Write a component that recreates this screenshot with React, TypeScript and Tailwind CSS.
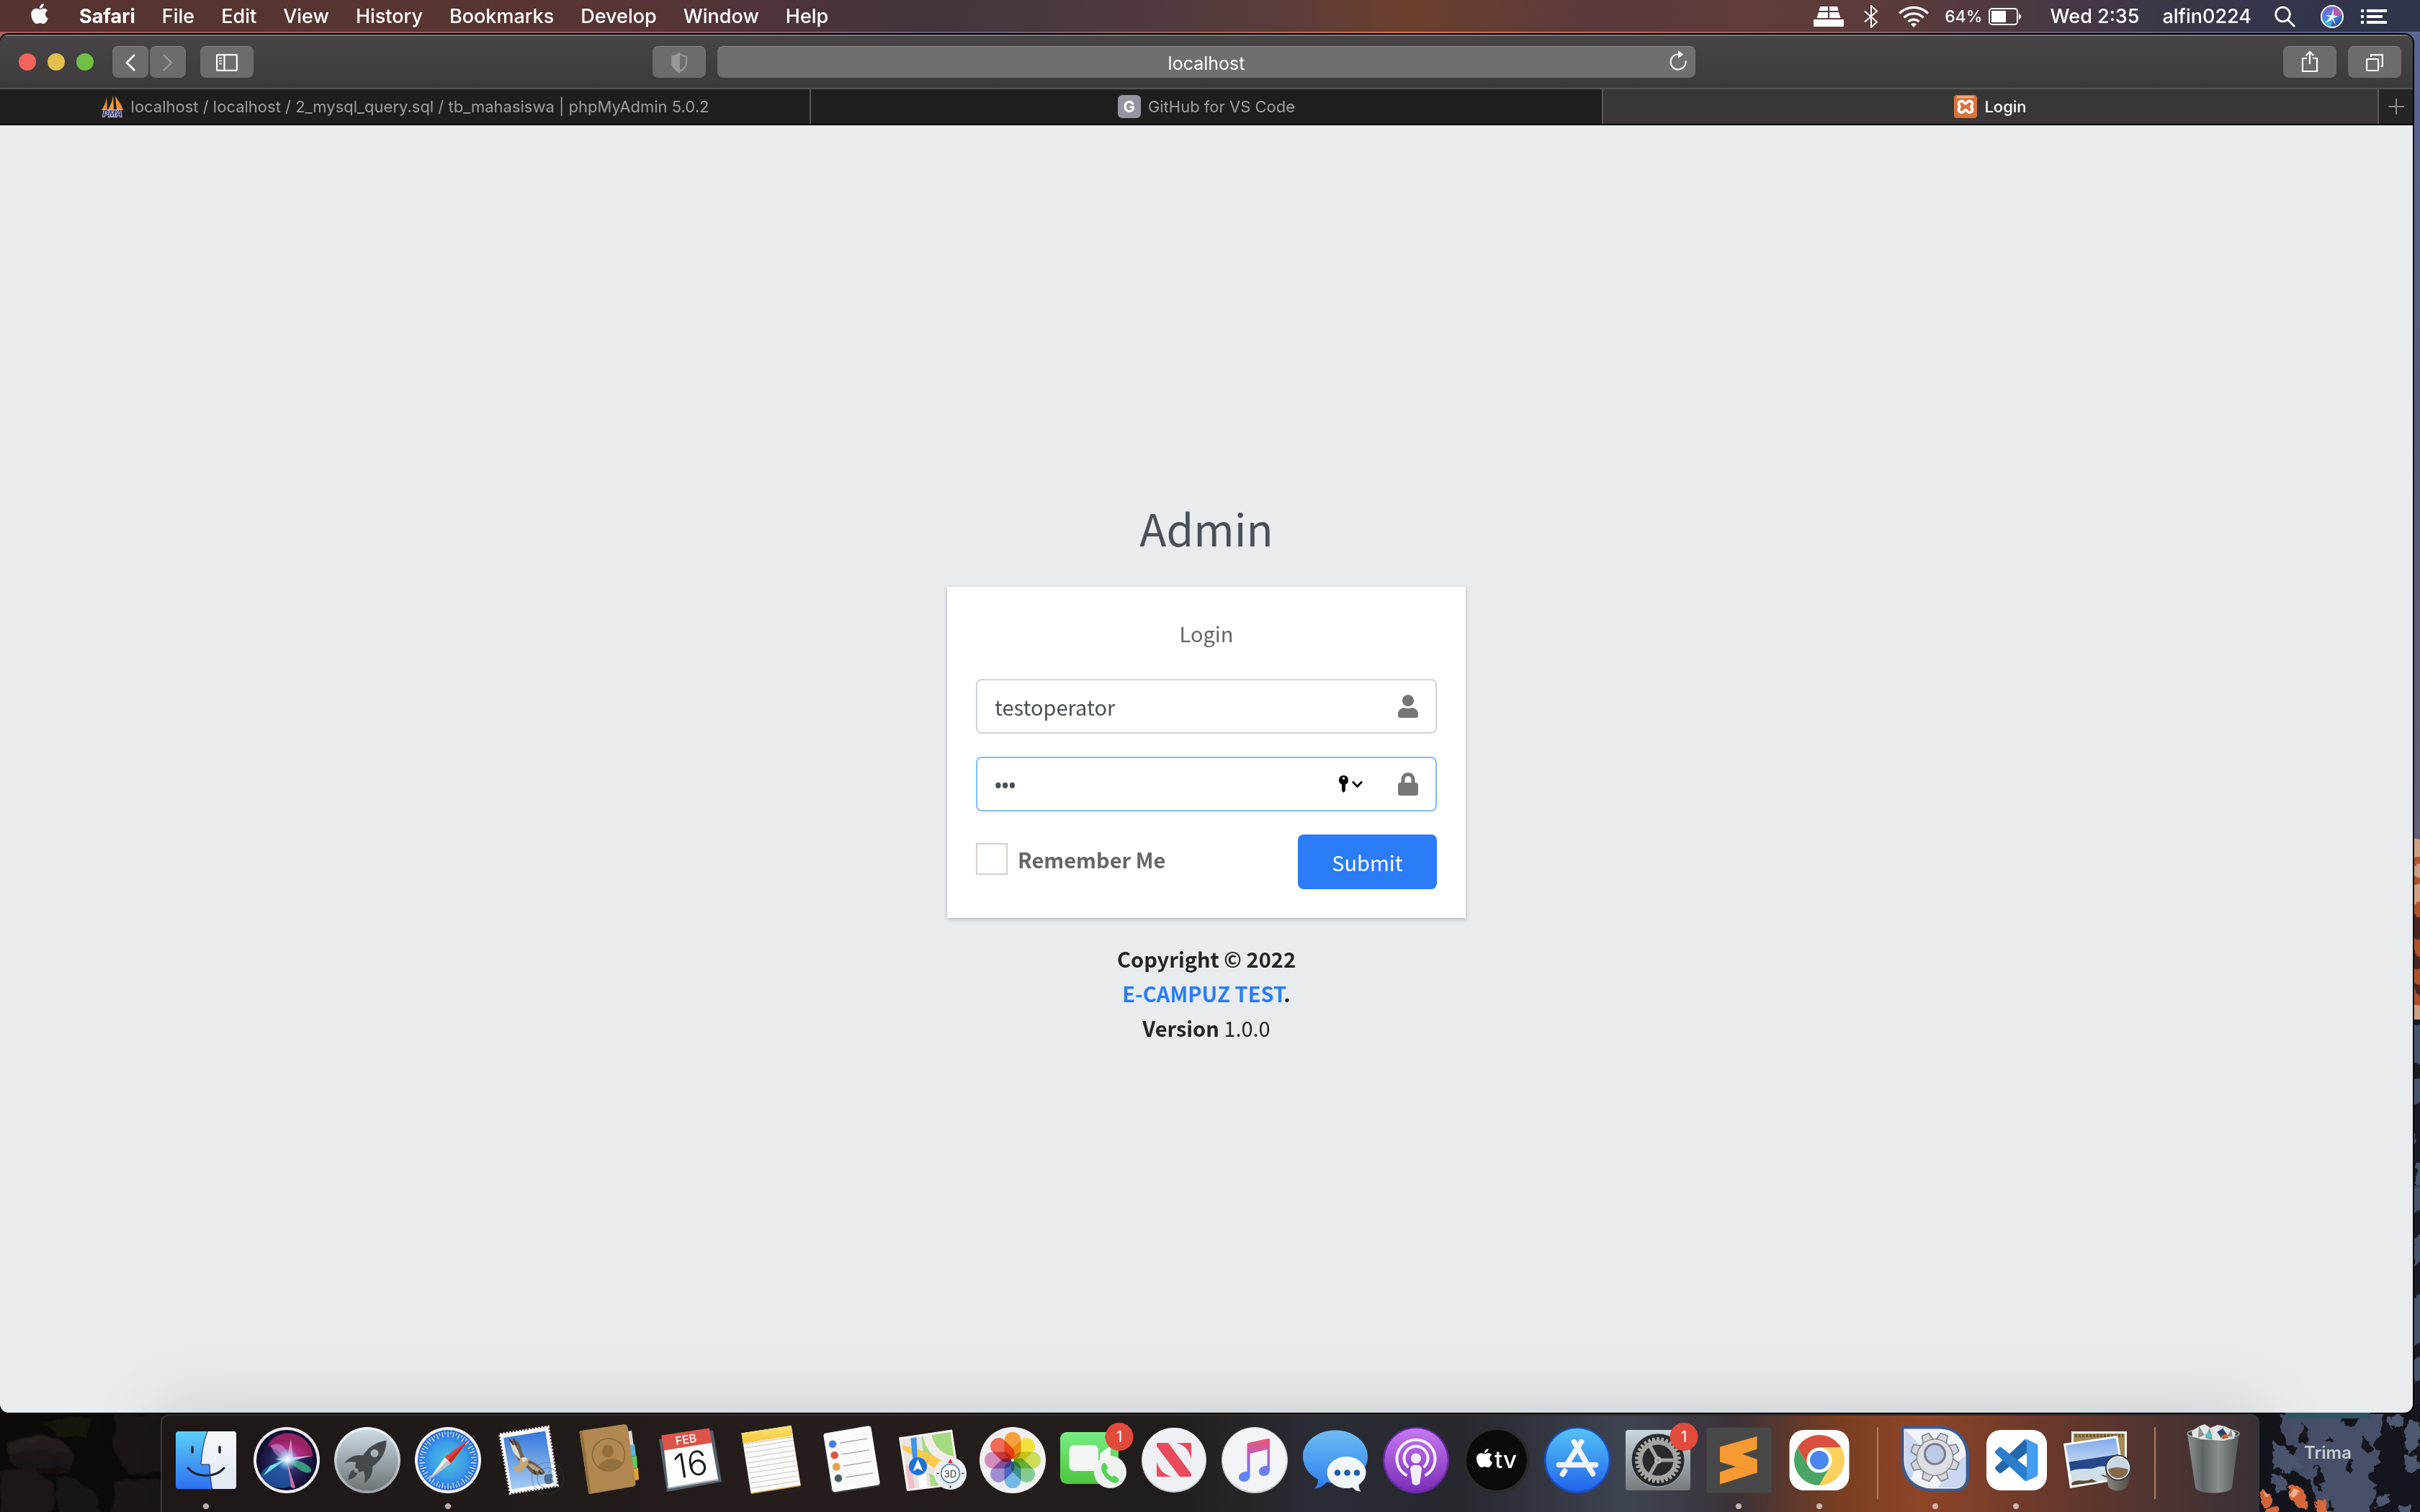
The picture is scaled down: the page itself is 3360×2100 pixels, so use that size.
import React, { useState } from "react";
import { FaApple, FaLock, FaUser } from "react-icons/fa";

/* ---------- wallpaper ---------- */

function Wallpaper() {
  return (
    <svg className="absolute inset-0 -z-10 h-full w-full" viewBox="0 0 3360 2100" preserveAspectRatio="none" aria-hidden="true">
      <defs>
        <linearGradient id="sky" x1="0" x2="1" y1="0" y2="0">
          <stop offset="0" stopColor="#a8615c" />
          <stop offset="0.3" stopColor="#8f6372" />
          <stop offset="0.4" stopColor="#665a78" />
          <stop offset="0.58" stopColor="#d0754a" />
          <stop offset="0.7" stopColor="#a96a66" />
          <stop offset="0.85" stopColor="#6d6078" />
          <stop offset="1" stopColor="#54608c" />
        </linearGradient>
        <linearGradient id="side" x1="0" x2="0" y1="0" y2="1">
          <stop offset="0" stopColor="#5b6794" />
          <stop offset="0.5" stopColor="#54597a" />
          <stop offset="1" stopColor="#665f77" />
        </linearGradient>
        <linearGradient id="rockA" x1="0" x2="0" y1="0" y2="1">
          <stop offset="0" stopColor="#2a2321" />
          <stop offset="1" stopColor="#120e0e" />
        </linearGradient>
        <filter id="rough" x="-5%" y="-5%" width="110%" height="110%">
          <feTurbulence type="fractalNoise" baseFrequency="0.09" numOctaves="3" seed="4" result="n" />
          <feDisplacementMap in="SourceGraphic" in2="n" scale="14" xChannelSelector="R" yChannelSelector="G" />
        </filter>
        <filter id="soft" x="-5%" y="-5%" width="110%" height="110%">
          <feTurbulence type="fractalNoise" baseFrequency="0.04" numOctaves="2" seed="9" result="n" />
          <feDisplacementMap in="SourceGraphic" in2="n" scale="16" xChannelSelector="R" yChannelSelector="G" />
          <feGaussianBlur stdDeviation="1.500" />
        </filter>
      </defs>
      <rect width="3360" height="2100" fill="#0d0a0a" />
      <rect width="3360" height="60" fill="url(#sky)" />
      <rect x="3330" y="40" width="30" height="1130" fill="url(#side)" />
      <path d="M3330 1160l30 6v250h-30z" fill="#cfa184" />
      <rect x="3330" y="1416" width="30" height="684" fill="#1a1b24" />
      <g filter="url(#rough)">
        <path d="M3340 1196l30-10v8l-30 12zM3340 1220l30-4v8l-30 8zM3340 1250l30 8v140l-30-6z" fill="#b1522c" />
        <path d="M3340 1270l30 4v30l-30 4zM3346 1320l24 10v20l-24-6zM3352 1366l18 4v16l-18-4z" fill="#4a2520" />
        <path d="M3340 1424h30v58l-30-14zM3346 1500l24-4v32l-24 8zM3340 1570l14 6-6 24-8 4zM3354 1614l16-4v30l-16 10zM3340 1650h30v30l-30 12zM3350 1720l20-8v34l-20 14zM3346 1806l24-16v70l-24 14zM3350 1888l20-8v30l-20 10z" fill="#4a546e" />
      </g>
      {/* snowy slope */}
      <rect x="3110" y="1950" width="250" height="150" fill="#15161d" />
      <g filter="url(#rough)">
        <path d="M3165 1962h144l-4 22-10 26 10 16-16 26 10 18-10 40h-64l-12-40-20-22-24-14 16-16-14-20z" fill="#465069" />
        <path d="M3156 2000l26 14 14 20-18 14-22-12zM3150 2050l16-6 12 18-14 14zM3318 1968l20-2-2 16-16 4zM3346 1970l14 6v30l-18 14-4-20zM3338 2022l18-2 2 20-16 6zM3298 2080l16-4 4 12-16 6zM3330 2094l16-4 2 10h-16z" fill="#4e5871" />
        <path d="M3196 1976l8 12-2 20-10-6zM3256 1962h16l6 10-10 10-14-6zM3232 1994l8 6-8 4zM3284 1996l8 12-2 12-10-8zM3262 2028l6 12-6 6-6-8zM3216 2032l9 18-2 22-10-14zM3198 2052l11 8-3 24-10-10zM3236 2084l6 14h-10zM3178 2004l11 6-5 9-10-5z" fill="#13141b" />
        <path d="M3140 2066l12 6 2 16-14 4zM3176 2066l16-4 10 14 4 18-16 2-10-16zM3214 2088l14-4 4 20h-14zM3146 2092l18-2v16h-18z" fill="#d8683c" />
        <path d="M3182 2068l8 4-2 6-8-2zM3144 2070l6 4-4 6z" fill="#f7b48a" />
      </g>
      {/* boulders */}
      <g filter="url(#soft)">
        <path d="M10 2004l40-12 40 8 14 24-8 24-50-4-36-18z" fill="url(#rockA)" />
        <path d="M0 2040l44-2 26 20 6 30-8 20H0z" fill="#1f1918" />
        <path d="M76 2050l32 4 26 20 6 34H80z" fill="#191413" />
        <path d="M156 1964h80v80l-56 4-22-36z" fill="#1a1514" />
        <path d="M160 2056h70v50h-74z" fill="#1b1615" />
        <path d="M60 1976l40-8 30 4-12 22-40 0z" fill="#161210" />
      </g>
    </svg>
  );
}

/* ---------- menu bar ---------- */

const menus = ["File", "Edit", "View", "History", "Bookmarks", "Develop", "Window", "Help"];

function SiriGlyph({ className }: { className: string }) {
  return (
    <svg className={className} viewBox="0 0 32 32" aria-hidden="true">
      <defs>
        <linearGradient id="siriMini" x1="0.2" x2="0.8" y1="0" y2="1">
          <stop offset="0" stopColor="#8a5fd6" />
          <stop offset="0.5" stopColor="#3f8ee0" />
          <stop offset="1" stopColor="#2b3f9e" />
        </linearGradient>
      </defs>
      <circle cx="16" cy="16" r="16" fill="#fff" />
      <circle cx="16" cy="16" r="14" fill="url(#siriMini)" />
      <path d="M18 4c8 0 11 6 11 11l-12-1z" fill="#d4509c" opacity="0.8" />
      <path d="M16 15L4 24c3 4 7 6 11 6z" fill="#4fd0f0" opacity="0.6" />
      <path d="M18 5l0 9 7 2-7 2 3 10-5-8-9 5 6-8-6-3 8 0z" fill="#fff" opacity="0.9" />
    </svg>
  );
}

function MenuBar() {
  return (
    <header className="flex h-11 shrink-0 items-center justify-between bg-[linear-gradient(90deg,#55332f_0%,#573532_20%,#563436_27%,#49343c_35%,#43353f_39%,#513a3e_48%,#5b3c3a_53%,#6b3f2c_58%,#59393d_67%,#5f3c37_72%,#5a3a3c_79%,#473845_85%,#35364a_92%,#2f3449_100%)] pt-0.5 pr-[46px] pl-[41px] text-[27px] font-medium text-white">
      <nav className="flex items-center gap-[37px]" aria-label="Menu bar">
        <button aria-label="Apple menu" className="mr-1 mb-2 flex">
          <FaApple className="h-8 w-7" />
        </button>
        <button className="font-bold">Safari</button>
        {menus.map((m) => (
          <button key={m}>{m}</button>
        ))}
      </nav>
      <div className="flex items-center">
        <svg className="mr-7 h-7 w-[42px]" viewBox="0 0 42 28" fill="#fff" aria-label="Keyboard">
          <path d="M9 0h11v6H7.500zM22 0h11l1.500 6H22zM7 8h13v8H4.500zM22 8h13l2.500 8H22zM1 18h40a1 1 0 0 1 1 1v8a1 1 0 0 1-1 1H1a1 1 0 0 1-1-1v-8a1 1 0 0 1 1-1z" />
        </svg>
        <svg className="mr-7 h-8 w-5" viewBox="0 0 20 32" fill="none" stroke="#fff" strokeWidth="2" aria-label="Bluetooth">
          <path d="M1 8.500l17 15L10 31V1l8 7.500-17 15" />
        </svg>
        <svg className="mr-[22px] h-[30px] w-[42px]" viewBox="0 0 42 30" fill="none" stroke="#fff" strokeWidth="3.200" aria-label="Wi-Fi">
          <path d="M1.200 10.500a28 28 0 0 1 39.600 0M7.500 16.500a19 19 0 0 1 27 0M13.500 22a11 11 0 0 1 15 0" />
          <path d="M21 30l-4-4.500a6 6 0 0 1 8 0z" fill="#fff" stroke="none" />
        </svg>
        <span className="mr-2 text-[23px]">64%</span>
        <svg className="mr-10 h-6 w-[46px]" viewBox="0 0 46 24" aria-label="Battery">
          <rect x="1" y="1" width="39" height="22" rx="4" fill="none" stroke="#fff" strokeWidth="2" />
          <rect x="4" y="4" width="20" height="16" rx="1" fill="#fff" />
          <path d="M42 8c4 1 4 7 0 8z" fill="#fff" />
        </svg>
        <button className="mr-8">Wed 2:35</button>
        <button className="mr-8">alfin0224</button>
        <button aria-label="Search" className="mr-[34px]">
          <svg className="h-[30px] w-[30px]" viewBox="0 0 30 30" fill="none" stroke="#fff" strokeWidth="2.800">
            <circle cx="11.500" cy="12" r="9.800" />
            <path d="M18.500 19.500l9.500 9.500" />
          </svg>
        </button>
        <button aria-label="Siri" className="mr-6">
          <SiriGlyph className="h-8 w-8" />
        </button>
        <button aria-label="Notification center">
          <svg className="h-5 w-9" viewBox="0 0 36 20" fill="#fff">
            <path d="M0 0h4v4H0zM8 0h28v4H8zM0 8h4v4H0zM8 8h22v4H8zM0 16h4v4H0zM8 16h28v4H8z" />
          </svg>
        </button>
      </div>
    </header>
  );
}

/* ---------- browser chrome ---------- */

function Toolbar() {
  const btn = "flex h-11 items-center justify-center rounded-lg border-t border-[#838182] bg-[#6d6b6c]";
  return (
    <div className="flex h-[76px] shrink-0 items-center border-t-2 border-b-2 border-t-[#7c7b7c] border-b-[#555354] bg-linear-to-b from-[#474546] to-[#3c3a3b] px-4">
      <div className="flex flex-1 items-center">
        <div className="ml-2.5 flex gap-4">
          <button aria-label="Close" className="h-6 w-6 rounded-full bg-[#f1635a]" />
          <button aria-label="Minimize" className="h-6 w-6 rounded-full bg-[#e2c04b]" />
          <button aria-label="Zoom" className="h-6 w-6 rounded-full bg-[#6fc044]" />
        </div>
        <div className="ml-[26px] flex gap-0.5">
          <button aria-label="Back" className={btn + " w-[50px]"}>
            <svg className="h-6 w-4" viewBox="0 0 16 24" fill="none" stroke="#fff" strokeWidth="2.800">
              <path d="M14 1L3 12l11 11" />
            </svg>
          </button>
          <button aria-label="Forward" className={btn + " w-[50px]"}>
            <svg className="h-6 w-4" viewBox="0 0 16 24" fill="none" stroke="#989697" strokeWidth="2.600">
              <path d="M2 1l11 11L2 23" />
            </svg>
          </button>
        </div>
        <button aria-label="Sidebar" className={btn + " ml-5 w-[74px]"}>
          <svg className="h-6 w-[30px]" viewBox="0 0 30 24" fill="none" stroke="#fff" strokeWidth="2.200">
            <rect x="1.100" y="1.100" width="27.800" height="21.800" rx="1.500" />
            <path d="M11.500 1v22" />
            <path d="M4 5.500h4M4 9.500h4M4 13.500h4" strokeWidth="1.800" stroke="#ddd" />
          </svg>
        </button>
        <button aria-label="Privacy report" className={btn + " mr-4 ml-auto w-[74px]"}>
          <svg className="h-7 w-6" viewBox="0 0 24 28" fill="none" stroke="#989697" strokeWidth="2">
            <path d="M12 1.500c3 2.500 6 3.500 10 4v8c0 6-4 10-10 13.500C6 23.500 2 19.500 2 13.500v-8c4-.5 7-1.500 10-4z" />
            <path d="M12 1.500V27C6 23.500 2 19.500 2 13.500v-8c4-.5 7-1.500 10-4z" fill="#989697" />
          </svg>
        </button>
      </div>
      <div className="relative h-11 w-[1358px]">
        <input aria-label="Address" defaultValue="localhost" className="h-full w-full rounded-lg border-t border-[#8a8889] bg-[#706f6f] pt-0.5 text-center text-[25px] text-white outline-none" />
        <button aria-label="Reload" className="absolute top-1.5 right-3">
          <svg className="h-7 w-6" viewBox="0 0 24 28" fill="none" stroke="#eee" strokeWidth="2.200">
            <path d="M22.500 14.500A10.500 10.500 0 1 1 13 5.500" />
            <path d="M12 0v11l7.500-5.500z" fill="#eee" stroke="none" />
          </svg>
        </button>
      </div>
      <div className="flex flex-1 justify-end gap-4">
        <button aria-label="Share" className={btn + " w-[74px]"}>
          <svg className="mb-1 h-[30px] w-6" viewBox="0 0 24 30" fill="none" stroke="#fff" strokeWidth="2.200">
            <path d="M8 11H2v18h20V11h-6M12 19V2M6.500 7.500L12 2l5.500 5.500" />
          </svg>
        </button>
        <button aria-label="Show tabs" className={btn + " w-[74px]"}>
          <svg className="h-6 w-6" viewBox="0 0 24 24" fill="none" stroke="#fff" strokeWidth="2.200">
            <rect x="1.100" y="7" width="16" height="16" rx="1.500" />
            <path d="M7 4V1.100h15.900V17H20.500" />
          </svg>
        </button>
      </div>
    </div>
  );
}

function TabBar() {
  return (
    <div className="flex h-[50px] shrink-0 border-b-2 border-black bg-[#1f1f1f] text-[22px] text-[#a09f9f]" role="tablist">
      <button role="tab" aria-selected="false" className="flex min-w-0 flex-[1126] items-center justify-center gap-2.5 border-r-2 border-[#5c5a5b]">
        <svg className="h-8 w-8 overflow-visible" viewBox="0 0 32 32" aria-hidden="true">
          <path d="M8 2l1 19H1c3-5 6-10 7-19z" fill="#e08a3a" />
          <path d="M17 0l1 21h-8c3-6 6-12 7-21z" fill="#f0a04c" />
          <path d="M20 1c3 6 9 12 11 20h-9z" fill="#e8913e" />
          <text x="16" y="30" textAnchor="middle" fontFamily="Liberation Sans" fontWeight="bold" fontStyle="italic" fontSize="12" fill="#2c2f6b" stroke="#c9cbe6" strokeWidth="2" paintOrder="stroke">PMA</text>
        </svg>
        <span>localhost / localhost / 2_mysql_query.sql / tb_mahasiswa | phpMyAdmin 5.0.2</span>
      </button>
      <button role="tab" aria-selected="false" className="flex min-w-0 flex-[1100] items-center justify-center gap-2.5 border-r-2 border-[#5c5a5b]">
        <span className="flex h-8 w-8 items-center justify-center rounded-md bg-[#9495a0] font-bold text-white">G</span>
        <span>GitHub for VS Code</span>
      </button>
      <button role="tab" aria-selected="true" className="flex min-w-0 flex-[1077] items-center justify-center gap-2.5 border-r-2 border-[#5c5a5b] bg-[#383637] font-medium text-white">
        <svg className="h-8 w-8" viewBox="0 0 32 32" aria-hidden="true">
          <rect width="32" height="32" rx="4" fill="#d9743a" />
          <rect x="4" y="1.500" width="24" height="2.500" rx="1.200" fill="#f0b48c" />
          <g fill="none" stroke="#fff" strokeWidth="3.600" strokeLinejoin="round">
            <path d="M6.500 12a4 4 0 0 1 7.500-1.500c.5 1 1 1.300 2 1.300s1.500-.3 2-1.300a4 4 0 0 1 7.500 1.500c0 2-.5 3-1.800 4.200 1.300 1.300 1.800 2.300 1.800 4.300a4 4 0 0 1-7.500 1.500c-.5-1-1-1.300-2-1.300s-1.500.3-2 1.300a4 4 0 0 1-7.500-1.500c0-2 .5-3 1.800-4.300C7 15 6.500 14 6.500 12z" />
          </g>
        </svg>
        <span>Login</span>
      </button>
      <button aria-label="New tab" className="flex w-[47px] items-center justify-center bg-[#262525]">
        <svg className="h-[22px] w-[22px]" viewBox="0 0 22 22" stroke="#8b8a8a" strokeWidth="2">
          <path d="M11 0v22M0 11h22" />
        </svg>
      </button>
    </div>
  );
}

/* ---------- login page ---------- */

function LoginPage() {
  const [user, setUser] = useState("testoperator");
  const [pass, setPass] = useState("abc");
  return (
    <main className="flex flex-1 flex-col items-center justify-center bg-[#e9ecef] font-['Noto_Sans_CJK_SC','Noto_Sans',sans-serif] text-[29px] leading-12 text-[#212529]">
      <div className="w-[720px]">
        <h1 className="mb-[34px] text-center text-[61px] leading-24 text-[#495057]">Admin</h1>
        <form
          className="bg-white p-10 text-[#666] shadow-[0_2px_6px_rgba(0,0,0,0.2),0_0_2px_rgba(0,0,0,0.125)]"
          onSubmit={(e) => e.preventDefault()}
        >
          <p className="mb-10 text-center">Login</p>
          <div className="mb-8 flex h-[76px] items-center rounded-lg border-2 border-[#ced4da] px-6">
            <input aria-label="Username" value={user} onChange={(e) => setUser(e.target.value)} className="min-w-0 flex-1 text-[#495057] outline-none" />
            <FaUser className="h-8 w-7 text-[#777]" />
          </div>
          <div className="mb-8 flex h-[76px] items-center rounded-lg border-2 border-[#80bdff] px-6">
            <input aria-label="Password" type="password" value={pass} onChange={(e) => setPass(e.target.value)} className="min-w-0 flex-1 pt-1 font-['Noto_Sans'] text-[26px] font-bold text-[#495057] outline-none" />
            <button type="button" aria-label="Saved passwords" className="mr-12">
              <svg className="h-6 w-[34px]" viewBox="0 0 34 24">
                <path fillRule="evenodd" d="M6.500 0a6.500 6.500 0 0 1 2.500 12.500V21l-2.500 3L4 21V12.500A6.500 6.500 0 0 1 6.500 0zm0 2.200a1.700 1.700 0 1 0 0 3.400 1.700 1.700 0 0 0 0-3.400z" />
                <path d="M19 8.500l6.500 7 6.500-7" fill="none" stroke="#000" strokeWidth="2.600" />
              </svg>
            </button>
            <FaLock className="h-8 w-7 text-[#777]" />
          </div>
          <div className="flex h-[76px] items-start justify-between">
            <label className="mt-3 flex h-11 items-center gap-3.5 font-bold">
              <input type="checkbox" className="h-11 w-11 appearance-none border-2 border-[#d3cfc8] bg-white checked:bg-[#2a7df8]" />
              Remember Me
            </label>
            <button type="submit" className="h-[76px] w-[193px] rounded-lg bg-[#2a7cf7] text-white">
              Submit
            </button>
          </div>
        </form>
        <footer className="mt-8 text-center">
          <p className="font-bold">Copyright © 2022</p>
          <p className="font-bold">
            <a href="#" className="text-[#2a7cf7]">E-CAMPUZ TEST</a>.
          </p>
          <p>
            <b>Version</b> 1.0.0
          </p>
        </footer>
      </div>
    </main>
  );
}

/* ---------- dock icons (112 x 112 grid) ---------- */

const C = 56;

const Finder = () => (
  <>
    <defs>
      <linearGradient id="fB" x1="0" x2="0" y1="0" y2="1"><stop offset="0" stopColor="#5ad0f8" /><stop offset="1" stopColor="#2f6ef0" /></linearGradient>
      <linearGradient id="fW" x1="0" x2="0" y1="0" y2="1"><stop offset="0" stopColor="#f6f7f8" /><stop offset="1" stopColor="#dfe8f4" /></linearGradient>
    </defs>
    <rect x="14" y="16" width="84" height="80" rx="4" fill="url(#fB)" />
    <path d="M58 16h36a4 4 0 0 1 4 4v72a4 4 0 0 1-4 4H64.500C62.500 85 61.500 74 61 62H49C50 46 53 30 58 16z" fill="url(#fW)" />
    <path d="M58 16C53 30 50 46 49 62h12c.5 12 1.500 23 3.500 34" fill="none" stroke="#1d2733" strokeWidth="1" />
    <path d="M37 38v7M75 38v7" stroke="#1b2430" strokeWidth="3.500" strokeLinecap="round" />
    <path d="M31 67c12 14 38 14 50 0" fill="none" stroke="#1b2430" strokeWidth="3" strokeLinecap="round" />
  </>
);

const Siri = () => (
  <>
    <defs>
      <radialGradient id="sB"><stop offset="0" stopColor="#43578c" /><stop offset="0.6" stopColor="#241d55" /><stop offset="1" stopColor="#100d2c" /></radialGradient>
      <radialGradient id="sC"><stop offset="0" stopColor="#fff" /><stop offset="0.35" stopColor="#cfeaff" stopOpacity="0.8" /><stop offset="1" stopColor="#8fd0ff" stopOpacity="0" /></radialGradient>
      <radialGradient id="sP" cx="0.4" cy="0.8"><stop offset="0" stopColor="#8d4fae" /><stop offset="0.6" stopColor="#c22f83" /><stop offset="1" stopColor="#a32467" /></radialGradient>
    </defs>
    <circle cx={C} cy={C} r="46" fill="#ececee" />
    <circle cx={C} cy={C} r="42" fill="url(#sB)" />
    <path d="M30 36c8-22 46-26 60 4 4 10 2 13-8 12-10 0-18 0-24 3-6-8-16-14-28-19z" fill="url(#sP)" opacity="0.9" />
    <path d="M34 36c12-8 26 4 24 20-10 0-20-8-24-20z" fill="#c89ae0" opacity="0.55" />
    <path d="M56 56c-14 2-32 8-36 20 8 18 28 22 42 16z" fill="#2467b8" opacity="0.7" />
    <path d="M56 56c18-2 34 8 34 14s-10 4-18-2z" fill="#3fb98c" opacity="0.8" />
    <path d="M56 54L23 78l10-14z" fill="#7df0f4" opacity="0.9" />
    <path d="M56 56l12 38c-2 2-5 1-6-2z" fill="#e87fc0" opacity="0.85" />
    <path d="M56 56l6-30 3 28z" fill="#e6a3dc" opacity="0.8" />
    <path d="M40 54l50-4-34 9z" fill="#d7f0ff" opacity="0.8" />
    <circle cx="57" cy="55" r="16" fill="url(#sC)" />
  </>
);

const Launchpad = () => (
  <>
    <defs>
      <linearGradient id="lB" x1="0" x2="0" y1="0" y2="1"><stop offset="0" stopColor="#cbdbe2" /><stop offset="1" stopColor="#6e7375" /></linearGradient>
      <linearGradient id="lR" x1="0" x2="0" y1="0" y2="1"><stop offset="0" stopColor="#eef8fb" /><stop offset="1" stopColor="#9fa3a5" /></linearGradient>
    </defs>
    <circle cx={C} cy={C} r="46" fill="url(#lR)" />
    <circle cx={C} cy={C} r="42.500" fill="url(#lB)" />
    <path fillRule="evenodd" d="M82.500 28.500C68 31 57 38 50 49.500c-9-2-19 2-26 10.500 6-2 11-2 16-1l-1 8 4 1 1 5 7-2c2 6 2 11 1 17 8-6 12-14 11-23 13-9 20-22 19.500-36.500zM66 41a5.500 5.500 0 1 0 0 11 5.500 5.500 0 0 0 0-11z" fill="#45494c" />
    <path d="M37 69c-5 3-7 8-7.500 14 6-1 11-4 13-9l-4-1z" fill="#45494c" />
  </>
);

const ticks = Array.from({ length: 60 }, (_, i) => i * 6);

const Safari = () => (
  <>
    <defs>
      <radialGradient id="saB"><stop offset="0" stopColor="#4fc2d8" /><stop offset="0.6" stopColor="#3a9ce8" /><stop offset="1" stopColor="#2767e4" /></radialGradient>
    </defs>
    <circle cx={C} cy={C} r="46" fill="#f0f1f2" />
    <circle cx={C} cy={C} r="42" fill="url(#saB)" />
    {ticks.map((a) => (
      <path key={a} d={a % 12 ? "M56 16v4" : "M56 16v8"} stroke="#e9f4fb" strokeWidth="1.200" transform={`rotate(${a} 56 56)`} />
    ))}
    <path d="M85 27L51.500 52l8.500 8.500z" fill="#e9433c" />
    <path d="M85 27L56 56l4 4.500z" fill="#c22d27" />
    <path d="M28.500 84.500l23-32.500L56 56z" fill="#f2f3f4" />
    <path d="M28.500 84.500L60 60.500 56 56z" fill="#bfc4c8" />
  </>
);

const Mail = () => (
  <>
    <defs>
      <linearGradient id="mB" x1="0" x2="0" y1="0" y2="1"><stop offset="0" stopColor="#3576d8" /><stop offset="1" stopColor="#a7cdf2" /></linearGradient>
    </defs>
    <path d="M16 20L83 9.500l13 82L30.500 102z" fill="#fafafa" stroke="#fafafa" strokeWidth="3.500" strokeDasharray="2.500 2" />
    <path d="M21 25L79 15.500l12 71.500L32.500 96.500z" fill="url(#mB)" />
    <path d="M29 27l4 2 2-4 2 5 4 0c4 5 5 13 8 20l5 5c9 3 17 8 25 18l-3 3-6 0c-6 2-12-3-16-9l-8-6c-9-9-13-20-15-34z" fill="#6f5d4c" />
    <path d="M30 30c7 2 12 12 15 25-9-5-13-14-15-25z" fill="#dedad2" />
    <path d="M54 60c8 1 15 5 21 12-8 1-17-4-21-12z" fill="#b7a58b" />
    <path d="M29 27l6 8M35 26l4 9M74 76l-4-6M66 76l-3-6" stroke="#2e2620" strokeWidth="1.500" />
    <path d="M44 54c4-3 9-2 13 0l-2 4c1 4-2 8-6 10l-5 6c-4-1-8-4-10-8l9-4z" fill="#c8a574" />
    <path d="M46 53c4-2 7-1 8 1l-6 5z" fill="#efe6d6" />
    <circle cx="82.500" cy="81" r="22" fill="none" stroke="#3b4a63" strokeWidth="1.200" opacity="0.35" />
    <circle cx="82.500" cy="81" r="14.500" fill="none" stroke="#3b4a63" strokeWidth="1.200" opacity="0.45" />
    <path d="M83 76c5-3 8 1 5 4 0 3 1 4 2 5-2 4-4 5-6 4-3 1-5 0-6-4-2-6 1-10 5-9zM83 74c0-2 2-4 4-4" fill="#46607c" opacity="0.85" />
  </>
);

const Contacts = () => (
  <>
    <path d="M80 16l7-1 3 22-8 1z" fill="#d8d8d8" />
    <path d="M84 35l7-1 2 16-8 1z" fill="#5ab4e4" />
    <path d="M86 51l8-1 1 17-8 1z" fill="#5ecb63" />
    <path d="M88 68l8-1 1 16-8 2z" fill="#e6a32e" />
    <path d="M14.500 17a2 2 0 0 1 2-2L76 6.300a5 5 0 0 1 5.500 4L92.500 88a4 4 0 0 1-3 4.500L29 103a2 2 0 0 1-2-2z" fill="#b08850" />
    <path d="M14.500 17l4-1.500 12.500 87-3.500.5z" fill="#94703d" />
    <circle cx="55" cy="48.500" r="22.500" fill="none" stroke="#8c6a39" strokeWidth="1.600" />
    <ellipse cx="54" cy="43.500" rx="8" ry="9" fill="#936f3c" />
    <path d="M41 65c4-12 28-15 33-4-8 13-26 14-33 4z" fill="#936f3c" />
  </>
);

const Calendar = () => (
  <>
    <path d="M13 27l70-12 5 0 12 71-76 14z" fill="#56626c" />
    <path d="M24 92l70-12 2 4-70 12z" fill="#a9adb0" />
    <path d="M20 42l66-11 9 51-69 12z" fill="#fdfdfd" />
    <path d="M16 21.500l67-10 3 20.500-66 10.500z" fill="#dc5348" />
    <g transform="rotate(-9 56 56)" textAnchor="middle" fontFamily="Inter">
      <text x="55" y="32.500" fontSize="16" fontWeight="500" fill="#fff">FEB</text>
      <text x="56" y="78.500" fontSize="47" fontWeight="300" fill="#1c1c1e">16</text>
    </g>
  </>
);

const noteLines = Array.from({ length: 9 }, (_, i) => i * 7);

const Notes = () => (
  <>
    <defs>
      <linearGradient id="nY" x1="0" x2="0" y1="0" y2="1"><stop offset="0" stopColor="#fae073" /><stop offset="1" stopColor="#f6c937" /></linearGradient>
    </defs>
    <path d="M15.500 18.500L84.500 8l13.500 84-69 11z" fill="#caa24a" />
    <path d="M15.500 18.500L84.500 8l13 82.500-69 11z" fill="#fbfaf8" />
    <path d="M15.500 18.500L84.500 8l2.500 14-69 10.500z" fill="url(#nY)" />
    <path d="M18.500 34l68.500-10.500" stroke="#8d8a84" strokeWidth="1" strokeDasharray="1.500 1.500" />
    {noteLines.map((d) => (
      <path key={d} d="M20 39l68-10.500" stroke="#c9c8c6" strokeWidth="1.200" transform={`translate(${d / 6.500} ${d})`} />
    ))}
  </>
);

const Reminders = () => (
  <>
    <path d="M20 22L84 12l12 80-62 10-6-2z" fill="#3d4347" />
    <path d="M17.500 23a4 4 0 0 1 3-4.500L79 8.500a4 4 0 0 1 4.500 3L95.500 86a4 4 0 0 1-3 4.500L34 100a4 4 0 0 1-4.500-3z" fill="#fafafa" />
    {[
      [30, 33.700, "#3d7ff0"],
      [32.700, 49.300, "#e0523f"],
      [35.300, 65.300, "#eb9f3f"],
      [38, 81.300, "#50585f"],
    ].map(([x, y, f]) => (
      <g key={String(f)}>
        <circle cx={x} cy={y} r="6.200" fill="#d6d7da" />
        <circle cx={x} cy={y} r="5" fill={String(f)} />
        <path d="M0 0l38-6" transform={`translate(${Number(x) + 10} ${Number(y) - 1.500})`} stroke="#9fa0a2" strokeWidth="1.200" />
      </g>
    ))}
  </>
);

const Maps = () => (
  <>
    <defs>
      <clipPath id="mapClip"><path d="M13.500 27.500l68-10.500 10.500 71-68 8z" /></clipPath>
    </defs>
    <path d="M10 24.500L84 13.500 95.500 90 21 99z" fill="#f5f4f2" />
    <g clipPath="url(#mapClip)">
      <rect width="112" height="112" fill="#e8e4de" />
      <path d="M40 10h60v60L74 66 44 46z" fill="#a5da83" />
      <path d="M48 14c4 30 20 42 48 44" fill="none" stroke="#f1eee9" strokeWidth="12" />
      <path d="M10 38l90 52v-18L46 44 10 34z" fill="#f9ca4d" />
      <path d="M10 60l18 6 6 40H10z" fill="#f3bfcb" />
      <path d="M52 74l50 28H56z" fill="#a5da83" />
      <path d="M25 12l9 0 2 50-6 0z" fill="#4393e6" />
      <path d="M36 76l12 0 2 26H40z" fill="#fff" />
    </g>
    <circle cx="36.500" cy="64.500" r="12.500" fill="#1f72d8" />
    <path d="M36.500 54.500l7 17-7-4-7 4z" fill="#fff" />
    <circle cx="81.500" cy="74.500" r="22.500" fill="#eceef1" />
    <circle cx="81.500" cy="74.500" r="12.800" fill="#f8f9fa" stroke="#5a8aa8" strokeWidth="1.800" />
    <path d="M81.500 54l3.500 6h-7z" fill="#e0332a" />
    <path d="M81.500 91v4M62.500 74.500h3M97.500 74.500h3" stroke="#333" strokeWidth="1.500" />
    <text x="81.500" y="79.500" textAnchor="middle" fontFamily="Inter" fontSize="13" fill="#333">3D</text>
  </>
);

const petals = ["#f6a03a", "#f3e13e", "#cbdc58", "#84cb94", "#74b9e8", "#a08fd0", "#d48cbd", "#f06a58"];

const Photos = () => (
  <>
    <circle cx={C} cy={C} r="46" fill="#f1f1f1" />
    <g className="isolate">
      {petals.map((p, i) => (
        <rect key={p} x="44.500" y="17" width="23" height="38" rx="11.500" fill={p} className="mix-blend-multiply" transform={`rotate(${i * 45} 56 56)`} />
      ))}
    </g>
    <circle cx={C} cy={C} r="2" fill="#fff" />
  </>
);

const Badge = () => (
  <>
    <circle cx="92" cy="23.500" r="19.500" fill="#e24a3b" />
    <text x="92" y="31" textAnchor="middle" fontFamily="Inter" fontSize="21" fill="#fff">1</text>
  </>
);

const FaceTime = () => (
  <>
    <defs>
      <linearGradient id="ftB" x1="0" x2="0" y1="0" y2="1"><stop offset="0" stopColor="#77ec84" /><stop offset="1" stopColor="#4fc53f" /></linearGradient>
    </defs>
    <rect x="10" y="17" width="81" height="72" rx="9" fill="url(#ftB)" />
    <rect x="22.500" y="35" width="40.500" height="36" rx="7" fill="#f3f5f4" />
    <path d="M65 47l12-9c1-1 3 0 3 2v27c0 2-2 3-3 2l-12-9z" fill="#f3f5f4" />
    <circle cx="79.500" cy="72.500" r="22.500" fill="#eef2ef" />
    <path d="M69 61c2-2 4-1 5 1l2 4c1 2-1 3-2 4 1 4 5 8 8 9 1-1 3-2 4-1l4 3c2 1 2 3 1 4-3 4-7 3-12 0-6-4-12-12-12-18 0-3 1-5 2-6z" fill="#57d156" />
    <Badge />
  </>
);

const News = () => (
  <>
    <circle cx={C} cy={C} r="45" fill="#c5cad0" />
    <circle cx={C} cy="55" r="44" fill="#eef0f3" />
    <path d="M32 34a2 2 0 0 1 2-2h14l32 43v2a2 2 0 0 1-2 2H64L32 37z" fill="#ea4a5e" />
    <path d="M59 32h19a2 2 0 0 1 2 2v21C78 43 71 35 59 32zM32 58c3 11 10 18 21 21H34a2 2 0 0 1-2-2z" fill="#ea4a5e" />
  </>
);

const Music = () => (
  <>
    <defs>
      <linearGradient id="muN" x1="0" x2="0" y1="0" y2="1"><stop offset="0" stopColor="#f2556c" /><stop offset="0.4" stopColor="#b260c6" /><stop offset="0.75" stopColor="#6a7cf6" /><stop offset="1" stopColor="#5a8bff" /></linearGradient>
    </defs>
    <circle cx={C} cy={C} r="46" fill="#c8cbd0" />
    <circle cx={C} cy="55.500" r="44.500" fill="#f3f4f6" />
    <path d="M45.500 34a3 3 0 0 1 2-2l27-6a2 2 0 0 1 2.500 2v42c0 5-4 8-8.500 8s-6.500-3-6.500-6.500 3-7 9.500-7.500l2-.5V41l-24 6v31c0 5-4 8-8.500 8s-7-3-7-6.500 3-7 9.500-7.500l2-.5z" fill="url(#muN)" />
  </>
);

const Messages = () => (
  <>
    <defs>
      <linearGradient id="meB" x1="0" x2="0" y1="0" y2="1"><stop offset="0" stopColor="#6dbcf4" /><stop offset="1" stopColor="#2f7ff0" /></linearGradient>
    </defs>
    <path d="M56 14.500c25 0 45 16 45 36.500S81 88 56 88c-4 0-8-.5-12-1.500-4 5-11 9-17.500 9 4-3 6-8 5.500-13C19 76 11 64 11 51c0-20.500 20-36.500 45-36.500z" fill="url(#meB)" />
    <path d="M71.500 51C86 51 98.500 61 98.500 73c0 7-4 13-10 17 0 4 1 7 3 9.500-5 0-9-2-11.500-5.500-2.500.5-5 1-8.500 1-15 0-27-10-27-22s12-22 27-22z" fill="#f1f6fb" />
    <g fill="#1f5da8"><circle cx="59" cy="73.500" r="4.300" /><circle cx="72.500" cy="73.500" r="4.300" /><circle cx="86" cy="73.500" r="4.300" /></g>
  </>
);

const Podcasts = () => (
  <>
    <defs>
      <linearGradient id="poB" x1="0" x2="0" y1="0" y2="1"><stop offset="0" stopColor="#c678f2" /><stop offset="1" stopColor="#7a2fb8" /></linearGradient>
    </defs>
    <circle cx={C} cy={C} r="46" fill="#6b2aa8" />
    <circle cx={C} cy="55.500" r="43.500" fill="url(#poB)" />
    <g fill="none" stroke="#f3eef8" strokeWidth="4">
      <path d="M43.500 77.500a26.500 26.500 0 1 1 25 0" />
      <path d="M45.500 66a16.500 16.500 0 1 1 21 0" />
    </g>
    <circle cx={C} cy="53.500" r="7" fill="#f3eef8" />
    <path d="M48 68c0-7 16-7 16 0l-2.500 19c-.8 5-10.200 5-11 0z" fill="#f3eef8" />
  </>
);

const AppleTv = () => (
  <>
    <circle cx={C} cy={C} r="46" fill="#2b2b2b" />
    <circle cx={C} cy={C} r="42" fill="#0b0b0b" />
    <g transform="translate(27 38)"><FaApple size={30} x="-3" color="#fff" /></g>
    <text x="53" y="67" fontFamily="Inter" fontSize="33" fontWeight="500" fill="#fff">tv</text>
  </>
);

const AppStore = () => (
  <>
    <defs>
      <linearGradient id="asB" x1="0" x2="0" y1="0" y2="1"><stop offset="0" stopColor="#55c3f8" /><stop offset="1" stopColor="#2264ec" /></linearGradient>
    </defs>
    <circle cx={C} cy={C} r="46" fill="#1850c8" />
    <circle cx={C} cy="55.500" r="43.500" fill="url(#asB)" />
    <g stroke="#f1f4f8" strokeWidth="7.500" strokeLinecap="round">
      <path d="M61.500 30.500L42 61M38.500 71l-3 4.500M51.500 30.500l26 44.500M30.500 62.500h51" />
    </g>
  </>
);

const teeth = Array.from({ length: 30 }, (_, i) => i * 12);

const Settings = () => (
  <>
    <defs>
      <linearGradient id="seB" x1="0" x2="0" y1="0" y2="1"><stop offset="0" stopColor="#c9d8df" /><stop offset="1" stopColor="#77797b" /></linearGradient>
    </defs>
    <rect x="11" y="14" width="90" height="84" rx="4" fill="url(#seB)" />
    <circle cx={C} cy={C} r="37" fill="#2b2b2d" stroke="#9fb4c8" strokeWidth="1" />
    {teeth.map((a) => (
      <path key={a} d="M54.500 24h3l1 6h-5z" fill="#a9a9a7" transform={`rotate(${a} 56 56)`} />
    ))}
    <circle cx={C} cy={C} r="24.500" fill="none" stroke="#a3a3a1" strokeWidth="6" />
    <path d="M56 56h24M56 56L44 35M56 56L44 77" stroke="#a3a3a1" strokeWidth="5" />
    <circle cx={C} cy={C} r="5" fill="#b9b9b7" />
    <circle cx={C} cy={C} r="2" fill="#7f8f9c" />
    <Badge />
  </>
);

const Sublime = () => (
  <>
    <rect x="11" y="11" width="90.500" height="90.500" rx="4" fill="#484848" />
    <path d="M81.500 54.500v19L30 89.500v-17l22-7.500z" fill="#f79a32" />
    <path d="M81.500 73.500L50 65l22-8z" fill="#d9812a" />
    <path d="M81.500 23v17.500L61 47.500l20.500 7.500v18.500L30 58.500V37.500z" fill="#f79a32" />
  </>
);

const Chrome = () => (
  <>
    <rect x="14.500" y="14" width="83" height="84" rx="20" fill="#fdfdfd" />
    <path d="M56 21a35 35 0 0 1 30.300 17.500H56A17.500 17.500 0 0 0 40.800 64.700L25.700 38.500A35 35 0 0 1 56 21z" fill="#d9503f" />
    <path d="M25.700 38.500l15.100 26.200A17.500 17.500 0 0 0 71.200 64.700L56 91A35 35 0 0 1 25.700 38.500z" fill="#4aa564" />
    <path d="M86.300 38.500A35 35 0 0 1 56 91l15.200-26.300A17.500 17.500 0 0 0 56 38.500z" fill="#fbd05c" />
    <circle cx={C} cy={C} r="16.500" fill="#fff" />
    <circle cx={C} cy={C} r="13" fill="#4a86ee" />
  </>
);

const cogTeeth = Array.from({ length: 8 }, (_, i) => i * 45);

const Cog = () => (
  <>
    <path d="M8 12a4 4 0 0 1 4-4h48c26 0 43 18 43 42v30c0 12-8 20-18 20H52C26 100 8 82 8 56z" fill="#3e5a8a" />
    <path d="M12.500 12.500h48c24 0 38 16 38 38v29c0 10-6 16-15 16H52c-24 0-39.500-17-39.500-40z" fill="#f1f4fa" />
    <path d="M14 14l26 26-18 44C16 76 14 66 14 56zM98 50v30c0 8-6 14-14 14H60l20-30z" fill="#bfd0f0" opacity="0.8" />
    <g fill="#d5d6dc" stroke="#777a86" strokeWidth="1.500">
      {cogTeeth.map((a) => (
        <path key={a} d="M47 32l3.500-14h10L64 32z" transform={`rotate(${a + 22} 55.500 52)`} />
      ))}
      <circle cx="55.500" cy="52" r="25" />
    </g>
    <circle cx="55.500" cy="52" r="24.500" fill="#dddee3" />
    <circle cx="55.500" cy="47.500" r="14" fill="#b9cbe8" stroke="#7a7d89" strokeWidth="3" />
  </>
);

const VsCode = () => (
  <>
    <rect x="15" y="14" width="84" height="84" rx="20" fill="#fff" />
    <path d="M71 27v19L36 73.500a3 3 0 0 1-4-.3l-4-4a3 3 0 0 1 0-4.300L67 28.500z" fill="#2468ab" />
    <path d="M71 85V66L36 38.500a3 3 0 0 0-4 .3l-4 4a3 3 0 0 0 0 4.300L67 83.500z" fill="#2a7dcb" />
    <path d="M71 27l13 6a4 4 0 0 1 2.500 3.500v39A4 4 0 0 1 84 79l-13 6c-2 .5-4-.5-5-2 3 1 5-1 5-3V32c0-2-2-4-5-3 1-1.500 3-2.500 5-2z" fill="#459df0" />
  </>
);

const Preview = () => (
  <>
    <defs>
      <linearGradient id="pvS" x1="0" x2="0" y1="0" y2="1"><stop offset="0" stopColor="#7fa9ea" /><stop offset="1" stopColor="#c3d6f4" /></linearGradient>
      <linearGradient id="pvL" x1="0" x2="1" y1="0" y2="0"><stop offset="0" stopColor="#8f8a80" /><stop offset="1" stopColor="#4d4a45" /></linearGradient>
    </defs>
    <path d="M21 16h77v60H21z" fill="#f3f3f1" />
    <path d="M24 19h71v54H24z" fill="#a58a57" />
    <path d="M26 22h67" stroke="#6d5730" strokeWidth="4" strokeDasharray="3 2" />
    <path d="M10 33L85 22l10 60L19 95z" fill="#fbfbfb" />
    <path d="M13 35.500l69.500-10.200 4.500 25-69 10.500z" fill="url(#pvS)" />
    <path d="M17.500 58.500L86 48l3 16-68.500 12z" fill="#27478c" />
    <path d="M20 71c14-6 26 0 38-6 12-2 20 2 31 0l3 15L21.500 91.500z" fill="#cfdfe6" />
    <path d="M21 88c8-8 20 0 28-6l8 4-35 5zM60 76l12 2 10-2-4 8z" fill="#5e4a38" />
    <path d="M68 68l4 24c3 8 22 9 27 0l5-24z" fill="url(#pvL)" />
    <circle cx="86" cy="66.500" r="18" fill="#35373a" />
    <circle cx="86" cy="66.500" r="15.500" fill="#c9d6e4" stroke="#e9edf0" strokeWidth="1.500" />
    <path d="M72 69c8-5 20-3 28 0-1 8-7 12-14 12s-13-5-14-12z" fill="#86694a" />
  </>
);

const Trash = () => (
  <>
    <defs>
      <linearGradient id="trB" x1="0" x2="1" y1="0" y2="0"><stop offset="0" stopColor="#8d9293" /><stop offset="0.3" stopColor="#5f6465" /><stop offset="0.6" stopColor="#8a8f90" /><stop offset="1" stopColor="#525657" /></linearGradient>
    </defs>
    <path d="M21 19c2 9 70 9 72 0L83 94c-2 10-49 10-51 0z" fill="url(#trB)" />
    <ellipse cx="57" cy="19" rx="36" ry="7" fill="#3f4344" stroke="#a8acad" strokeWidth="1.500" />
    <path d="M27 16l10-7 8-3 8 5 10-4 10 2 8 4 7 5-2 8-16 3-14-1-16-1-12-4z" fill="#e3e5e6" />
    <path d="M37 9l8 12-9 4zM52 11l-6 14 10 3zM72 9l-8 10 4 8zM82 13l-6 10 8 1z" fill="#8c9092" />
    <path d="M62 17l8-5 6 8-6 6z" fill="#27446e" />
    <path d="M68 22l8-3 2 6-8 2z" fill="#c9602f" />
    <path d="M45 21l6-4 5 4-4 5z" fill="#4cc6b8" />
  </>
);

type DockItem = { name: string; draw: () => React.ReactElement; running?: boolean };

const dockGroups: DockItem[][] = [
  [
    { name: "Finder", draw: Finder, running: true },
    { name: "Siri", draw: Siri },
    { name: "Launchpad", draw: Launchpad },
    { name: "Safari", draw: Safari, running: true },
    { name: "Mail", draw: Mail },
    { name: "Contacts", draw: Contacts },
    { name: "Calendar", draw: Calendar },
    { name: "Notes", draw: Notes },
    { name: "Reminders", draw: Reminders },
    { name: "Maps", draw: Maps },
    { name: "Photos", draw: Photos },
    { name: "FaceTime", draw: FaceTime },
    { name: "News", draw: News },
    { name: "Music", draw: Music },
    { name: "Messages", draw: Messages },
    { name: "Podcasts", draw: Podcasts },
    { name: "TV", draw: AppleTv },
    { name: "App Store", draw: AppStore },
    { name: "System Preferences", draw: Settings },
    { name: "Sublime Text", draw: Sublime, running: true },
    { name: "Chrome", draw: Chrome, running: true },
  ],
  [
    { name: "Manager", draw: Cog, running: true },
    { name: "Visual Studio Code", draw: VsCode, running: true },
    { name: "Preview", draw: Preview },
  ],
  [{ name: "Trash", draw: Trash }],
];

function Dock() {
  return (
    <nav
      aria-label="Dock"
      className="relative mx-auto flex h-[136px] shrink-0 rounded-t-xl border-2 border-b-0 border-white/15 bg-[linear-gradient(90deg,#1d1817_0%,#211b1a_20%,#261d1d_30%,#211d1c_48%,#2a2c35_55%,#27282e_62%,#3f4453_70%,#3b3238_75%,#7a3e22_80%,#8f4528_84%,#6e3a2a_89%,#54352f_94%,#3a3037_100%)] bg-clip-padding pt-1.5 pr-[7px] pl-[5px] shadow-[0_0_100px_rgba(0,0,0,0.16)]"
    >
      {dockGroups.map((group, g) => (
        <React.Fragment key={g}>
          {g > 0 && (
            <div className="flex w-[49px] justify-center pt-2.5">
              <div className="h-[100px] w-0.5 bg-[#b47a66]" />
            </div>
          )}
          {group.map(({ name, draw: Draw, running }) => (
            <button key={name} aria-label={name} className="flex w-28 flex-col items-center gap-1">
              <svg className="h-28 w-28" viewBox="0 0 112 112">
                <Draw />
              </svg>
              {running && <span className="h-2 w-2 rounded-full bg-[#e6d2ca]/80" />}
            </button>
          ))}
        </React.Fragment>
      ))}
    </nav>
  );
}

export default function App() {
  return (
    <div className="relative isolate flex h-screen flex-col overflow-hidden bg-black font-[Inter,sans-serif]">
      <Wallpaper />
      <MenuBar />
      <section aria-label="Safari window" className="mt-1 mr-2.5 mb-0.5 flex flex-1 flex-col overflow-hidden rounded-xl shadow-[0_0_0_2px_#000]">
        <Toolbar />
        <TabBar />
        <LoginPage />
      </section>
      <div className="absolute right-[69px] bottom-[66px] flex w-[118px] flex-col items-center text-2xl font-semibold text-[#c9cbd0]">
        <span className="mb-8 h-2 w-full rounded-b bg-[#2f5564]" />
        Trima
      </div>
      <Dock />
    </div>
  );
}
